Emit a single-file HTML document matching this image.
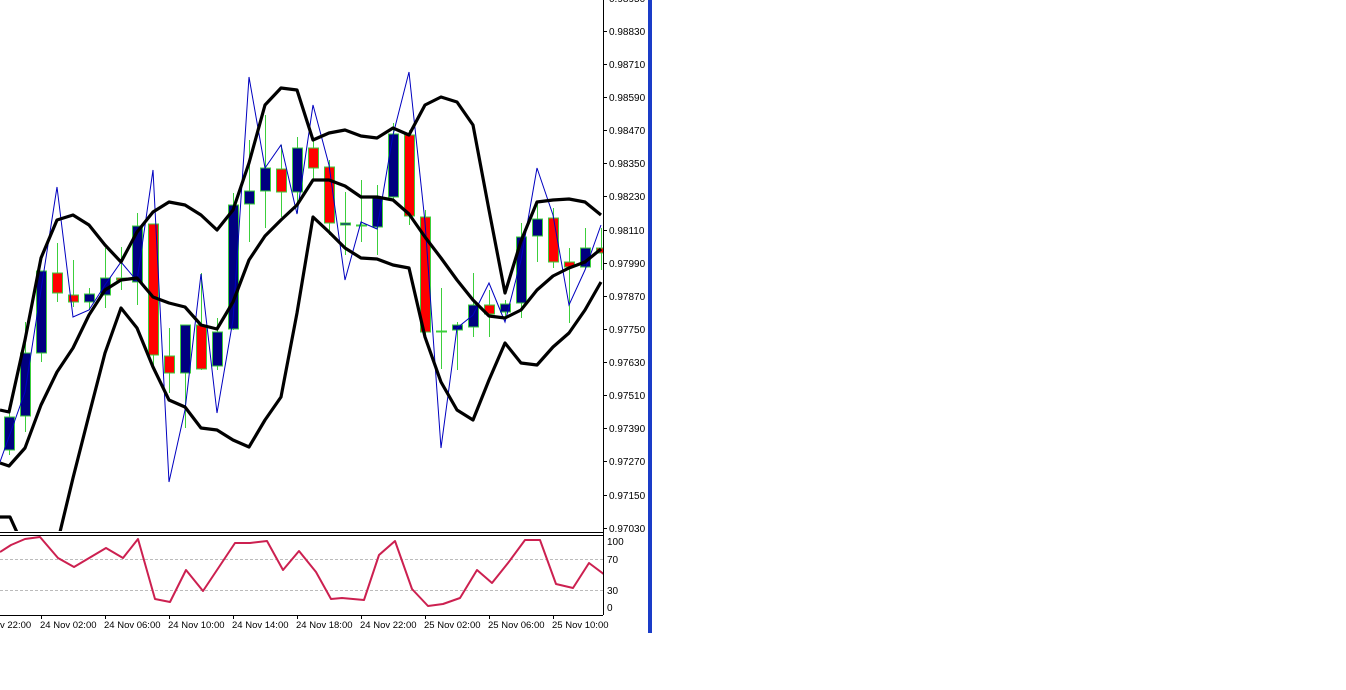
<!DOCTYPE html>
<html><head><meta charset="utf-8"><style>
html,body{margin:0;padding:0;background:#fff;width:1346px;height:690px;overflow:hidden}
svg{position:absolute;left:0;top:0}
text{font-family:"Liberation Sans",sans-serif;font-size:10px;fill:#000}
.t{font-size:9.5px}
</style></head><body>
<svg width="1346" height="690" viewBox="0 0 1346 690" xmlns="http://www.w3.org/2000/svg">
<defs><clipPath id="mc"><rect x="0" y="0" width="603" height="531"/></clipPath>
<clipPath id="ic"><rect x="0" y="536" width="603" height="79"/></clipPath></defs>
<g clip-path="url(#mc)">
<g stroke="#3ccf3c" stroke-width="1">
<line x1="9.5" y1="410" x2="9.5" y2="455"/><line x1="25.5" y1="322" x2="25.5" y2="432"/>
<line x1="41.5" y1="271" x2="41.5" y2="362"/><line x1="57.5" y1="243" x2="57.5" y2="302"/>
<line x1="73.5" y1="260" x2="73.5" y2="307"/><line x1="89.5" y1="288" x2="89.5" y2="310"/>
<line x1="105.5" y1="248" x2="105.5" y2="308"/><line x1="121.5" y1="247" x2="121.5" y2="290"/>
<line x1="137.5" y1="213" x2="137.5" y2="305"/><line x1="153.5" y1="224" x2="153.5" y2="370"/>
<line x1="169.5" y1="328" x2="169.5" y2="393"/><line x1="185.5" y1="325" x2="185.5" y2="428"/>
<line x1="201.5" y1="273" x2="201.5" y2="370"/><line x1="217.5" y1="318" x2="217.5" y2="370"/>
<line x1="233.5" y1="193" x2="233.5" y2="330"/><line x1="249.5" y1="140" x2="249.5" y2="242"/>
<line x1="265.5" y1="115" x2="265.5" y2="228"/><line x1="281.5" y1="145" x2="281.5" y2="217"/>
<line x1="297.5" y1="137" x2="297.5" y2="213"/><line x1="313.5" y1="140" x2="313.5" y2="180"/>
<line x1="329.5" y1="160" x2="329.5" y2="235"/><line x1="345.5" y1="192" x2="345.5" y2="255"/>
<line x1="361.5" y1="180" x2="361.5" y2="242"/><line x1="377.5" y1="185" x2="377.5" y2="255"/>
<line x1="393.5" y1="123" x2="393.5" y2="200"/><line x1="409.5" y1="130" x2="409.5" y2="225"/>
<line x1="425.5" y1="210" x2="425.5" y2="335"/><line x1="441.5" y1="288" x2="441.5" y2="369"/>
<line x1="457.5" y1="322" x2="457.5" y2="370"/><line x1="473.5" y1="273" x2="473.5" y2="337"/>
<line x1="489.5" y1="290" x2="489.5" y2="337"/><line x1="505.5" y1="300" x2="505.5" y2="317"/>
<line x1="521.5" y1="223" x2="521.5" y2="318"/><line x1="537.5" y1="203" x2="537.5" y2="262"/>
<line x1="553.5" y1="208" x2="553.5" y2="268"/><line x1="569.5" y1="248" x2="569.5" y2="323"/>
<line x1="585.5" y1="228" x2="585.5" y2="268"/><line x1="601.5" y1="228" x2="601.5" y2="270"/>
</g>
<g stroke="#3ccf3c" stroke-width="1">
<rect x="4.5" y="417" width="10" height="33" fill="#000080"/>
<rect x="20.5" y="353" width="10" height="63" fill="#000080"/>
<rect x="36.5" y="271" width="10" height="82" fill="#000080"/>
<rect x="52.5" y="273" width="10" height="20" fill="#ff0000"/>
<rect x="68.5" y="295" width="10" height="7" fill="#ff0000"/>
<rect x="84.5" y="294" width="10" height="8" fill="#000080"/>
<rect x="100.5" y="278" width="10" height="17" fill="#000080"/>
<rect x="116.5" y="278" width="10" height="2" fill="#ff0000"/>
<rect x="132.5" y="226" width="10" height="56" fill="#000080"/>
<rect x="148.5" y="224" width="10" height="131" fill="#ff0000"/>
<rect x="164.5" y="356" width="10" height="17" fill="#ff0000"/>
<rect x="180.5" y="325" width="10" height="48" fill="#000080"/>
<rect x="196.5" y="325" width="10" height="44" fill="#ff0000"/>
<rect x="212.5" y="332" width="10" height="34" fill="#000080"/>
<rect x="228.5" y="205" width="10" height="124" fill="#000080"/>
<rect x="244.5" y="191" width="10" height="13" fill="#000080"/>
<rect x="260.5" y="168" width="10" height="23" fill="#000080"/>
<rect x="276.5" y="169" width="10" height="23" fill="#ff0000"/>
<rect x="292.5" y="148" width="10" height="44" fill="#000080"/>
<rect x="308.5" y="148" width="10" height="20" fill="#ff0000"/>
<rect x="324.5" y="167" width="10" height="56" fill="#ff0000"/>
<rect x="340.5" y="223" width="10" height="2" fill="#000080"/>
<rect x="356.5" y="225" width="10" height="1" fill="#003000"/>
<rect x="372.5" y="198" width="10" height="29" fill="#000080"/>
<rect x="388.5" y="134" width="10" height="63" fill="#000080"/>
<rect x="404.5" y="135" width="10" height="81" fill="#ff0000"/>
<rect x="420.5" y="217" width="10" height="115" fill="#ff0000"/>
<rect x="436.5" y="331" width="10" height="1" fill="#003000"/>
<rect x="452.5" y="325" width="10" height="5" fill="#000080"/>
<rect x="468.5" y="305" width="10" height="22" fill="#000080"/>
<rect x="484.5" y="305" width="10" height="9" fill="#ff0000"/>
<rect x="500.5" y="304" width="10" height="8" fill="#000080"/>
<rect x="516.5" y="237" width="10" height="66" fill="#000080"/>
<rect x="532.5" y="219" width="10" height="17" fill="#000080"/>
<rect x="548.5" y="218" width="10" height="44" fill="#ff0000"/>
<rect x="564.5" y="262" width="10" height="5" fill="#ff0000"/>
<rect x="580.5" y="248" width="10" height="19" fill="#000080"/>
<rect x="596.5" y="248" width="10" height="5" fill="#ff0000"/>
</g>
<polyline fill="none" stroke="#0000c0" stroke-width="1" points="0,462 25,392 41,290 57,187 73,317 89,310 105,285 121,262 137,281 153,170 169,482 185,410 201,274 217,413 233,320 249,77 265,168 281,145 297,214 313,105 329,165 345,280 361,222 377,229 393,135 409,72 425,222 441,448 457,328 473,315 489,283 505,322 521,260 537,168 553,215 569,305 585,270 601,225"/>
<g fill="none" stroke="#000" stroke-width="3.2" stroke-linejoin="round">
<polyline points="0,410 9,412 25,340 41,258 57,220 73,215 89,225 105,245 121,262 137,232 153,212 169,202 185,205 201,215 217,230 233,210 249,163 265,105 281,88 297,90 313,140 329,133 345,130 361,136 377,138 393,128 409,135 425,105 441,97 457,102 473,125 489,210 505,293 521,241 537,202 553,200 569,199 585,202 601,215"/>
<polyline points="0,463 9,466 25,448 41,405 57,372 73,348 89,315 105,290 121,280 137,278 153,297 169,303 185,307 201,325 217,329 233,302 249,260 265,236 281,220 297,205 313,180 329,180 345,186 361,197 377,197 393,200 409,214 425,237 441,258 457,280 473,300 489,316 505,318 521,310 537,290 553,276 569,268 585,262 601,249"/>
<polyline points="0,517 10,517 25,550"/>
<polyline points="50,570 60,532 73,478 89,415 105,353 121,308 137,328 153,367 169,400 185,407 201,428 217,430 233,440 249,447 265,420 281,397 297,313 313,217 329,232 345,248 361,258 377,259 393,265 409,268 425,337 441,382 457,410 473,420 489,380 505,343 521,363 537,365 553,347 569,333 585,310 601,282"/>
</g>
</g>
<line x1="0" y1="532.5" x2="603" y2="532.5" stroke="#000"/>
<line x1="0" y1="535.5" x2="603" y2="535.5" stroke="#000"/>
<line x1="0" y1="615.5" x2="603" y2="615.5" stroke="#000"/>
<line x1="603.5" y1="0" x2="603.5" y2="615" stroke="#000"/>
<line x1="0" y1="559.5" x2="603" y2="559.5" stroke="#bbb" stroke-dasharray="3,2"/>
<line x1="0" y1="590.5" x2="603" y2="590.5" stroke="#bbb" stroke-dasharray="3,2"/>
<g clip-path="url(#ic)">
<polyline fill="none" stroke="#cc2050" stroke-width="2" stroke-linejoin="round" points="0,552 11,545 25,539 40,537 58,558 74,567 106,548 123,558 138,539 155,599 170,602 186,570 203,591 235,543 250,543 267,541 283,570 299,551 316,572 331,599 342,598 364,600 379,555 395,541 412,589 428,606 443,604 460,598 477,570 492,583 508,563 525,540 540,540 556,584 573,588 589,563 605,575"/>
</g>
<g stroke="#000">
<line x1="603" y1="31.5" x2="607" y2="31.5"/><line x1="603" y1="64.5" x2="607" y2="64.5"/><line x1="603" y1="97.5" x2="607" y2="97.5"/><line x1="603" y1="130.5" x2="607" y2="130.5"/><line x1="603" y1="163.5" x2="607" y2="163.5"/><line x1="603" y1="196.5" x2="607" y2="196.5"/><line x1="603" y1="230.5" x2="607" y2="230.5"/><line x1="603" y1="263.5" x2="607" y2="263.5"/><line x1="603" y1="296.5" x2="607" y2="296.5"/><line x1="603" y1="329.5" x2="607" y2="329.5"/><line x1="603" y1="362.5" x2="607" y2="362.5"/><line x1="603" y1="395.5" x2="607" y2="395.5"/><line x1="603" y1="428.5" x2="607" y2="428.5"/><line x1="603" y1="461.5" x2="607" y2="461.5"/><line x1="603" y1="495.5" x2="607" y2="495.5"/><line x1="603" y1="528.5" x2="607" y2="528.5"/>
<line x1="41.5" y1="615" x2="41.5" y2="619"/><line x1="105.5" y1="615" x2="105.5" y2="619"/><line x1="169.5" y1="615" x2="169.5" y2="619"/><line x1="233.5" y1="615" x2="233.5" y2="619"/><line x1="297.5" y1="615" x2="297.5" y2="619"/><line x1="361.5" y1="615" x2="361.5" y2="619"/><line x1="425.5" y1="615" x2="425.5" y2="619"/><line x1="489.5" y1="615" x2="489.5" y2="619"/><line x1="553.5" y1="615" x2="553.5" y2="619"/>
</g>
<g>
<text x="609" y="2">0.98950</text>
<text x="609" y="35">0.98830</text><text x="609" y="68">0.98710</text><text x="609" y="101">0.98590</text><text x="609" y="134">0.98470</text><text x="609" y="167">0.98350</text><text x="609" y="200">0.98230</text><text x="609" y="234">0.98110</text><text x="609" y="267">0.97990</text><text x="609" y="300">0.97870</text><text x="609" y="333">0.97750</text><text x="609" y="366">0.97630</text><text x="609" y="399">0.97510</text><text x="609" y="432">0.97390</text><text x="609" y="465">0.97270</text><text x="609" y="499">0.97150</text><text x="609" y="532">0.97030</text>
<text x="607" y="545">100</text><text x="607" y="563">70</text><text x="607" y="594">30</text><text x="607" y="611">0</text>
<text class="t" x="0" y="628">v 22:00</text><text class="t" x="40" y="628">24 Nov 02:00</text><text class="t" x="104" y="628">24 Nov 06:00</text><text class="t" x="168" y="628">24 Nov 10:00</text><text class="t" x="232" y="628">24 Nov 14:00</text><text class="t" x="296" y="628">24 Nov 18:00</text><text class="t" x="360" y="628">24 Nov 22:00</text><text class="t" x="424" y="628">25 Nov 02:00</text><text class="t" x="488" y="628">25 Nov 06:00</text><text class="t" x="552" y="628">25 Nov 10:00</text>
</g>
<rect x="648" y="0" width="4" height="633" fill="#1a3cc8"/>
</svg>
</body></html>
